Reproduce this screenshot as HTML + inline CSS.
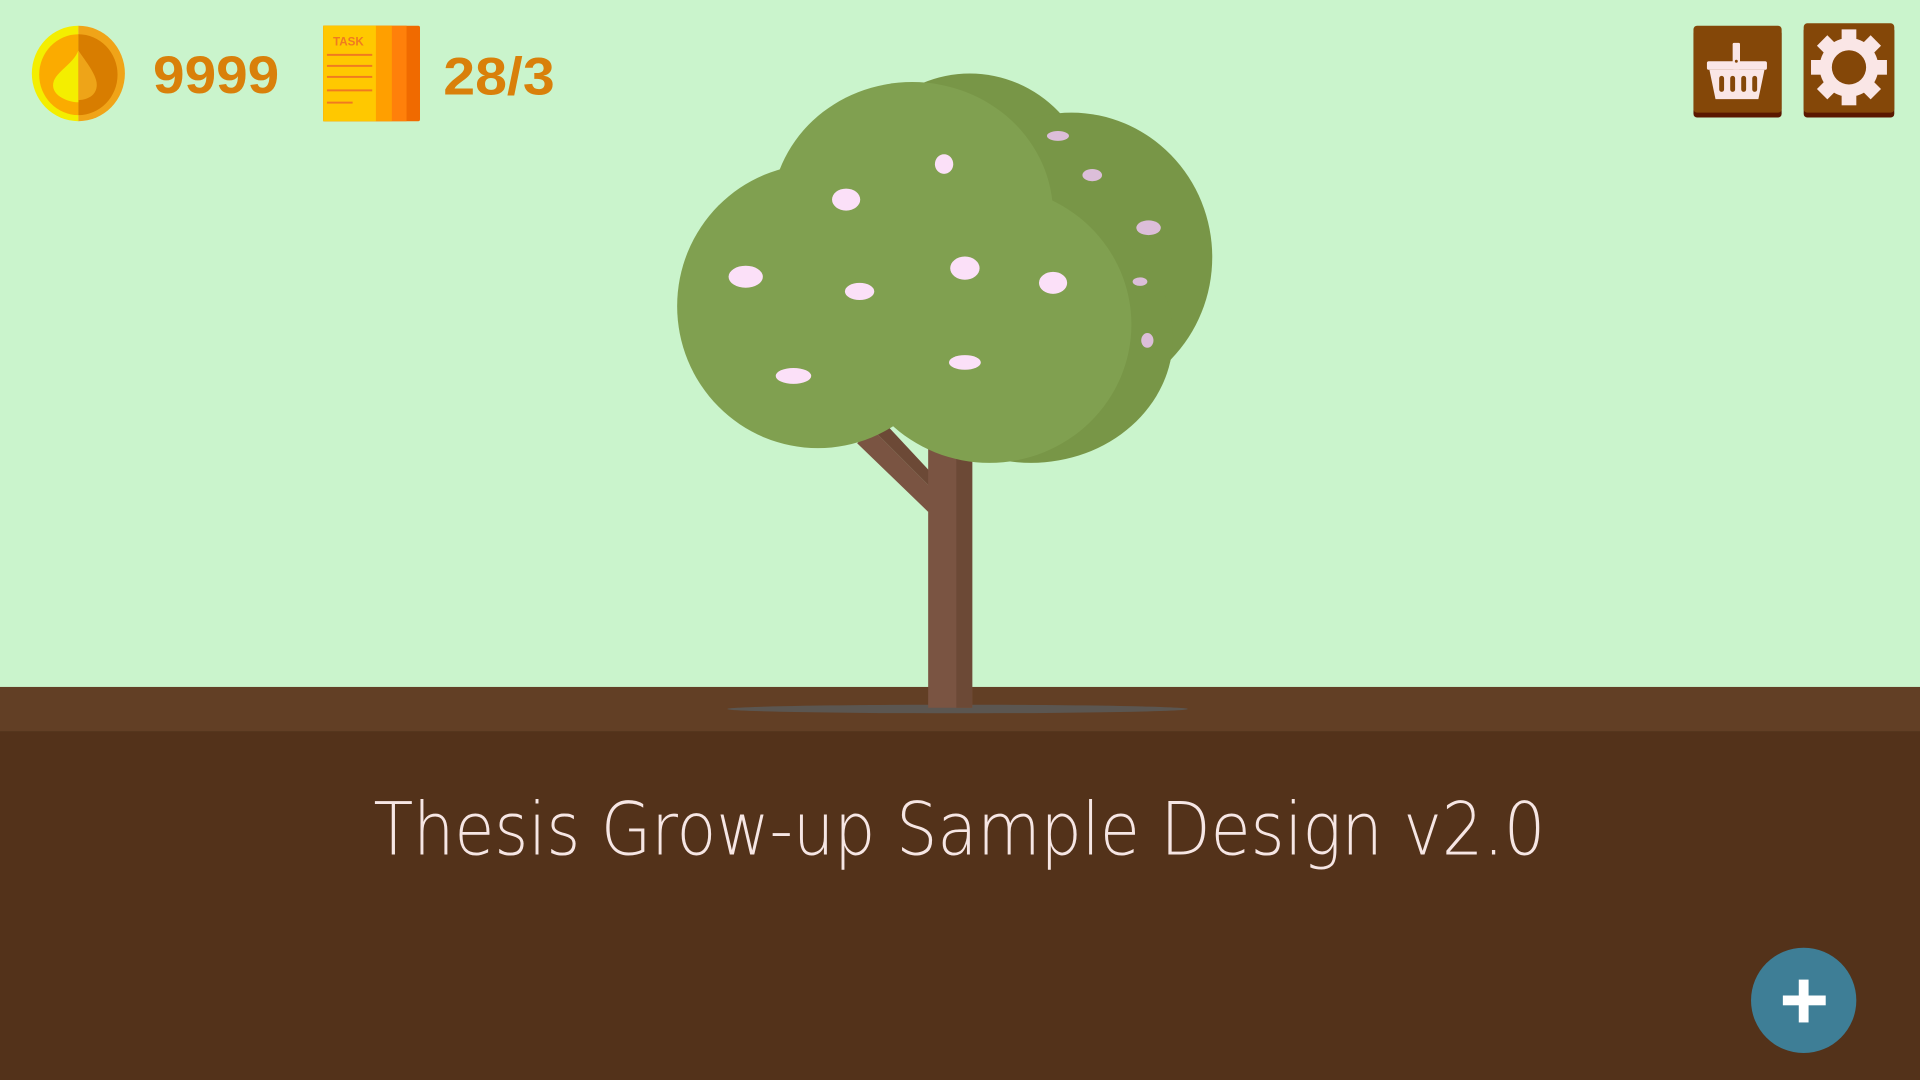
<!DOCTYPE html>
<html><head><meta charset="utf-8"><style>
html,body{margin:0;padding:0;width:1920px;height:1080px;overflow:hidden;background:#caf4cc}
svg{display:block}
</style></head><body>
<svg width="1920" height="1080" viewBox="0 0 1568 882" xmlns="http://www.w3.org/2000/svg">
<rect width="1568" height="882" fill="#caf4cc"/>
<rect y="561" width="1568" height="36" fill="#623f25"/>
<rect y="597" width="1568" height="285" fill="#53321a"/>
<ellipse cx="782" cy="579" rx="188" ry="3.5" fill="#5b5651"/>
<polygon points="700,362 712,350 766,404 758,418" fill="#7a5442"/>
<polygon points="712,350 724,347 766,392 766,404" fill="#6c4936"/>
<rect x="758" y="360" width="36" height="218" fill="#7a5442"/>
<rect x="781" y="360" width="13" height="218" fill="#6c4936"/>
<g fill="#789647">
<ellipse cx="792" cy="165" rx="102" ry="105"/>
<ellipse cx="875" cy="210" rx="115" ry="118"/>
<ellipse cx="842" cy="275" rx="116" ry="103"/>
</g>
<g fill="#80a050">
<ellipse cx="745" cy="175" rx="115" ry="108"/>
<ellipse cx="668" cy="250" rx="115" ry="116"/>
<ellipse cx="808" cy="265" rx="116" ry="113"/>
</g>
<g fill="#dcbed9">
<ellipse cx="864" cy="111" rx="9" ry="4"/>
<ellipse cx="892" cy="143" rx="8" ry="5"/>
<ellipse cx="938" cy="186" rx="10" ry="6"/>
<ellipse cx="931" cy="230" rx="6" ry="3.5"/>
<ellipse cx="937" cy="278" rx="5" ry="6"/>
</g>
<g fill="#fbe0f8">
<ellipse cx="609" cy="226" rx="14" ry="9"/>
<ellipse cx="691" cy="163" rx="11.5" ry="9"/>
<ellipse cx="771" cy="134" rx="7.5" ry="8"/>
<ellipse cx="702" cy="238" rx="12" ry="7"/>
<ellipse cx="788" cy="219" rx="12" ry="9.5"/>
<ellipse cx="860" cy="231" rx="11.5" ry="9"/>
<ellipse cx="648" cy="307" rx="14.5" ry="6.5"/>
<ellipse cx="788" cy="296" rx="13" ry="6"/>
</g>
<path d="M64,21 A38,39 0 0 0 64,99 Z" fill="#f4ee00"/>
<path d="M64,21 A38,39 0 0 1 64,99 Z" fill="#f0a418"/>
<path d="M64,28 A32,33 0 0 0 64,94 Z" fill="#fbab00"/>
<path d="M64,28 A32,33 0 0 1 64,94 Z" fill="#d87d00"/>
<path d="M64,50 C60,62 48,68 44,78 C40,91 55,98 64,98 Z" fill="#f4ee00" transform="translate(0,-8) scale(1,0.88) translate(0,6)"/>
<path d="M64,50 C70,60 80,74 79,83 C78,96 64,96 64,96 Z" fill="#eea418" transform="translate(0,-8) scale(1,0.88) translate(0,6)"/>
<text x="125" y="76" font-family="Liberation Sans, sans-serif" font-weight="bold" font-size="43" fill="#d9800a" textLength="103" lengthAdjust="spacingAndGlyphs">9999</text>
<rect x="264" y="21" width="79" height="78" rx="1.5" fill="#f06a00"/>
<rect x="264" y="21" width="68" height="78" fill="#ff800a"/>
<rect x="264" y="21" width="56" height="78" fill="#ff9f00"/>
<rect x="264" y="21" width="43" height="78" fill="#ffc800"/>
<text x="272" y="37" font-family="Liberation Sans, sans-serif" font-weight="bold" font-size="9.5" fill="#f07a20">TASK</text>
<g fill="#f07a20"><rect x="267" y="44" width="37" height="1.6"/><rect x="267" y="53" width="37" height="1.6"/><rect x="267" y="62" width="37" height="1.6"/><rect x="267" y="73" width="37" height="1.6"/><rect x="267" y="83" width="21" height="1.6"/></g>
<text x="362" y="77" font-family="Liberation Sans, sans-serif" font-weight="bold" font-size="43" fill="#d9800a" textLength="91" lengthAdjust="spacingAndGlyphs">28/3</text>
<rect x="1383" y="24" width="72" height="72" rx="3" fill="#5a1800"/>
<rect x="1383" y="21" width="72" height="71" rx="3" fill="#844708"/>
<g fill="#fae6e6">
<rect x="1415" y="35" width="6" height="22" rx="1"/>
<rect x="1394" y="50" width="49" height="7" rx="1.5"/>
<path d="M1396,57 H1441 L1436,81 H1401 Z"/>
</g>
<g fill="#844708"><rect x="1404" y="62" width="4" height="13" rx="2"/><rect x="1413" y="62" width="4" height="13" rx="2"/><rect x="1422" y="62" width="4" height="13" rx="2"/><rect x="1431" y="62" width="4" height="13" rx="2"/><circle cx="1418" cy="50" r="1.2"/></g>
<rect x="1473" y="22" width="74" height="74" rx="3" fill="#5a1800"/>
<rect x="1473" y="19" width="74" height="73" rx="3" fill="#844708"/>
<g fill="#fae6e6" transform="translate(1510,55)">
<circle r="24"/>
<g id="t"><rect x="-6" y="-31" width="12" height="12"/></g>
<use href="#t" transform="rotate(45)"/><use href="#t" transform="rotate(90)"/><use href="#t" transform="rotate(135)"/><use href="#t" transform="rotate(180)"/><use href="#t" transform="rotate(225)"/><use href="#t" transform="rotate(270)"/><use href="#t" transform="rotate(315)"/>
<circle r="14" fill="#844708"/>
</g>
<text x="305" y="698" font-family="DejaVu Sans, Liberation Sans, sans-serif" font-size="60" fill="#f6e6e4" textLength="957" lengthAdjust="spacingAndGlyphs" style="font-weight:200">Thesis Grow-up Sample Design v2.0</text>
<circle cx="1473" cy="817" r="43" fill="#3e7e96"/>
<rect x="1456" y="813" width="35" height="8" fill="#fff"/>
<rect x="1469" y="800" width="8" height="35" fill="#fff"/>
</svg>
</body></html>
